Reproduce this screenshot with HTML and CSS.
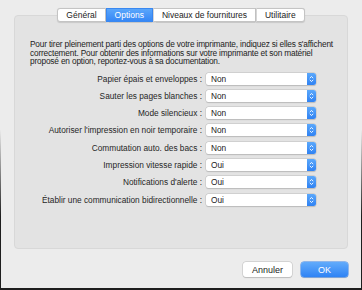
FILE: index.html
```html
<!DOCTYPE html>
<html>
<head>
    <meta charset="utf-8">
    <title>Options</title>
<link rel="stylesheet" href="styles.css">
</head>
<body>
<div class="window">

    <div class="tabs">
        <div class="tab">Général</div>
        <div class="tab active">Options</div>
        <div class="tab">Niveaux de fournitures</div>
        <div class="tab">Utilitaire</div>
    </div>

    <div class="box">
        <p class="intro">Pour tirer pleinement parti des options de votre imprimante, indiquez si elles s'affichent<br>correctement. Pour obtenir des informations sur votre imprimante et son matériel<br>proposé en option, reportez-vous à sa documentation.</p>

        <div class="rows">
            <div class="row"><span class="label">Papier épais et enveloppes :</span><div class="popup"><span>Non</span><i class="arrows"><svg width="5" height="8" viewBox="0 0 5 8"><path d="M0.8 3.2 L2.5 1.4 L4.2 3.2 M0.8 4.8 L2.5 6.6 L4.2 4.8" fill="none" stroke="#fff" stroke-width="0.9"/></svg></i></div></div>
            <div class="row"><span class="label">Sauter les pages blanches :</span><div class="popup"><span>Non</span><i class="arrows"><svg width="5" height="8" viewBox="0 0 5 8"><path d="M0.8 3.2 L2.5 1.4 L4.2 3.2 M0.8 4.8 L2.5 6.6 L4.2 4.8" fill="none" stroke="#fff" stroke-width="0.9"/></svg></i></div></div>
            <div class="row"><span class="label">Mode silencieux :</span><div class="popup"><span>Non</span><i class="arrows"><svg width="5" height="8" viewBox="0 0 5 8"><path d="M0.8 3.2 L2.5 1.4 L4.2 3.2 M0.8 4.8 L2.5 6.6 L4.2 4.8" fill="none" stroke="#fff" stroke-width="0.9"/></svg></i></div></div>
            <div class="row"><span class="label">Autoriser l'impression en noir temporaire :</span><div class="popup"><span>Non</span><i class="arrows"><svg width="5" height="8" viewBox="0 0 5 8"><path d="M0.8 3.2 L2.5 1.4 L4.2 3.2 M0.8 4.8 L2.5 6.6 L4.2 4.8" fill="none" stroke="#fff" stroke-width="0.9"/></svg></i></div></div>
            <div class="row"><span class="label">Commutation auto. des bacs :</span><div class="popup"><span>Non</span><i class="arrows"><svg width="5" height="8" viewBox="0 0 5 8"><path d="M0.8 3.2 L2.5 1.4 L4.2 3.2 M0.8 4.8 L2.5 6.6 L4.2 4.8" fill="none" stroke="#fff" stroke-width="0.9"/></svg></i></div></div>
            <div class="row"><span class="label">Impression vitesse rapide :</span><div class="popup"><span>Oui</span><i class="arrows"><svg width="5" height="8" viewBox="0 0 5 8"><path d="M0.8 3.2 L2.5 1.4 L4.2 3.2 M0.8 4.8 L2.5 6.6 L4.2 4.8" fill="none" stroke="#fff" stroke-width="0.9"/></svg></i></div></div>
            <div class="row"><span class="label">Notifications d'alerte :</span><div class="popup"><span>Oui</span><i class="arrows"><svg width="5" height="8" viewBox="0 0 5 8"><path d="M0.8 3.2 L2.5 1.4 L4.2 3.2 M0.8 4.8 L2.5 6.6 L4.2 4.8" fill="none" stroke="#fff" stroke-width="0.9"/></svg></i></div></div>
            <div class="row"><span class="label">Établir une communication bidirectionnelle :</span><div class="popup"><span>Oui</span><i class="arrows"><svg width="5" height="8" viewBox="0 0 5 8"><path d="M0.8 3.2 L2.5 1.4 L4.2 3.2 M0.8 4.8 L2.5 6.6 L4.2 4.8" fill="none" stroke="#fff" stroke-width="0.9"/></svg></i></div></div>
        </div>
    </div>

    <div class="buttons">
        <button type="button" class="btn">Annuler</button>
        <button type="button" class="btn default">OK</button>
    </div>

</div>
</body>
</html>
```

FILE: styles.css
```css
*
{
  margin: 0;
  padding: 0;
  box-sizing: border-box;
}

body
{
  font-family: 'Liberation Sans', Arial, sans-serif;
  font-size: 8.3px;
  color: #222;
  background: #ececec;
  width: 362px;
  height: 290px;
  overflow: hidden;
}

div.window
{
  height: 290px;
  padding: 8px 13px 0 13px;
  border-style: solid;
  border-width: 0 1px 2px 1px;
  border-image: linear-gradient(to bottom, rgba(30,30,30,0) 45%, #1e1e1e 75%) 1;
}

div.tabs
{
  display: flex;
  justify-content: center;
  height: 14px;
  margin-bottom: -7px;
  position: relative;
  z-index: 1;
  font-size: 8.5px;
}

div.tab
{
  height: 14px;
  line-height: 12px;
  padding: 0 8px;
  background: #fff;
  border: 1px solid #c4c4c4;
  border-left: 1px solid #d6d6d6;
  color: #222;
  box-shadow: 0 0.5px 1px rgba(0,0,0,0.12);
}

div.tab:first-child
{
  border-left-color: #c4c4c4;
  border-radius: 3px 0 0 3px;
}

div.tab:last-child
{
  border-radius: 0 3px 3px 0;
}

div.tab.active
{
  background: linear-gradient(#5aa6fb, #3687f5);
  border-color: #3a88f0;
  color: #fff;
}

div.box
{
  height: 234px;
  background: #e3e3e3;
  border: 1px solid #d8d8d8;
  border-radius: 4px;
  padding: 24px 0 0 15px;
}

p.intro
{
  line-height: 8.7px;
  letter-spacing: -0.17px;
  color: #222;
  white-space: nowrap;
}

div.rows
{
  display: flex;
  flex-direction: column;
  gap: 5.3px;
  margin-top: 6.4px;
}

div.row
{
  display: flex;
  align-items: center;
  height: 12px;
}

span.label
{
  width: 172px;
  text-align: right;
  white-space: nowrap;
  color: #262626;
}

div.popup
{
  display: flex;
  align-items: stretch;
  width: 110px;
  height: 12px;
  margin-left: 4px;
  background: #fff;
  border-radius: 2.5px;
  box-shadow: 0 0 0 0.5px #c2c2c2, 0 0.5px 1px rgba(0,0,0,0.2);
}

div.popup span
{
  flex: 1;
  line-height: 12px;
  padding-left: 5px;
  color: #222;
}

i.arrows
{
  display: flex;
  align-items: center;
  justify-content: center;
  width: 9.5px;
  background: linear-gradient(#5ba8fb, #2f82f3);
  border-radius: 0 2.5px 2.5px 0;
}

div.buttons
{
  display: flex;
  justify-content: flex-end;
  gap: 9px;
  margin-top: 13px;
}

button.btn
{
  font-family: 'Liberation Sans', Arial, sans-serif;
  font-size: 9px;
  width: 49px;
  height: 15px;
  background: #fff;
  color: #222;
  border: 0;
  border-radius: 3px;
  box-shadow: 0 0 0 0.5px #c0c0c0, 0 0.5px 1px rgba(0,0,0,0.2);
}

button.btn.default
{
  width: 47px;
  background: linear-gradient(#62abfb, #2f83f4);
  color: #fff;
  box-shadow: 0 0 0 0.5px #3a86ee, 0 0.5px 1px rgba(0,0,0,0.2);
}
```
